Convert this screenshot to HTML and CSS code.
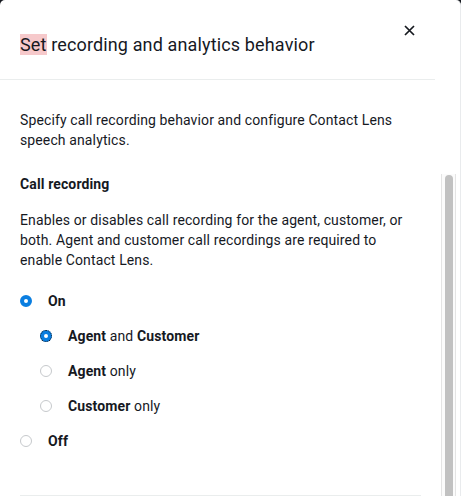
FILE: index.html
```html
<!DOCTYPE html>
<html lang="en">
<head>
<meta charset="utf-8">
<title>Set recording and analytics behavior</title>
<link rel="stylesheet" href="styles.css">
</head>
<body>
<div class="modal">
  <div class="modal-header">
    <h2 class="modal-title"><span class="hl">Set</span> recording and analytics behavior</h2>
    <button class="close" aria-label="Close">
      <svg width="11" height="11" viewBox="0 0 11 11"><path d="M1 1 L10 10 M10 1 L1 10" stroke="#16191f" stroke-width="1.7" fill="none" stroke-linecap="butt"/></svg>
    </button>
  </div>
  <div class="modal-body">
    <p class="desc">Specify call recording behavior and configure Contact Lens speech analytics.</p>
    <div class="scroll">
      <div class="scroll-content">
        <div class="section">
          <h3 class="section-title">Call recording</h3>
          <p class="section-text">Enables or disables call recording for the agent, customer, or both. Agent and customer call recordings are required to enable Contact Lens.</p>
          <div class="options">
            <label class="opt"><span class="radio checked"></span><span class="lbl"><b>On</b></span></label>
            <div class="sub-options">
              <label class="opt"><span class="radio checked focused"></span><span class="lbl"><b>Agent</b> and <b>Customer</b></span></label>
              <label class="opt"><span class="radio"></span><span class="lbl"><b>Agent</b> only</span></label>
              <label class="opt"><span class="radio"></span><span class="lbl"><b>Customer</b> only</span></label>
            </div>
            <label class="opt"><span class="radio"></span><span class="lbl"><b>Off</b></span></label>
          </div>
        </div>
      </div>
      <div class="scrollbar" aria-hidden="true"><div class="thumb"></div></div>
    </div>
  </div>
</div>
</body>
</html>
```
FILE: styles.css
```css
html, body {
  margin: 0;
  padding: 0;
  height: 100%;
  overflow: hidden;
  background: #16191f;
}
body {
  font-family: Roboto, "Noto Sans", sans-serif;
  color: #16191f;
  font-size: 14px;
  line-height: 20px;
  letter-spacing: 0.12px;
}
.modal {
  box-sizing: border-box;
  width: 461px;
  height: 100%;
  background: #ffffff;
  border-right: 1px solid #e9ebed;
  border-radius: 5px 5px 0 0;
}
.modal-header {
  display: flex;
  justify-content: space-between;
  align-items: flex-start;
  margin-right: 25px;
  padding: 33px 20px 22px 20px;
  border-bottom: 1px solid #eaeded;
}
.modal-title {
  margin: 0;
  font-size: 18px;
  line-height: 24px;
  font-weight: 400;
  color: #16191f;
  letter-spacing: 0.14px;
}
.hl {
  background: #f6c9cb;
}
.close {
  margin-top: -8px;
  padding: 0;
  border: 0;
  background: none;
  width: 11px;
  height: 11px;
  display: flex;
}
.modal-body {
  padding: 30px 0 0 20px;
}
.desc {
  margin: 0;
  padding-right: 40px;
}
.scroll {
  margin-top: 24px;
  width: 436px;
  height: 340px;
  display: flex;
  overflow: hidden;
}
.scroll-content {
  flex: 1;
  min-width: 0;
  padding-right: 20px;
}
.scrollbar {
  box-sizing: border-box;
  flex: none;
  width: 15px;
  height: 100%;
  padding: 1px 2px 1px 3px;
  background: #fbfbfb;
  border-left: 1px solid #e4e4e4;
  border-right: 1px solid #e4e4e4;
}
.thumb {
  width: 8px;
  height: 328px;
  border-radius: 4px;
  background: #c1c1c1;
}
.section {
  padding-bottom: 44px;
  border-bottom: 1px solid #eaeded;
}
.section-title {
  margin: 0;
  font-size: 14px;
  line-height: 20px;
  font-weight: 700;
}
.section-text {
  margin: 16px 0 0 0;
}
.options {
  margin-top: 21px;
  display: flex;
  flex-direction: column;
  gap: 15px;
}
.sub-options {
  display: flex;
  flex-direction: column;
  gap: 15px;
  padding-left: 20px;
}
.opt {
  display: flex;
  align-items: center;
  height: 20px;
}
.radio {
  box-sizing: border-box;
  width: 12px;
  height: 12px;
  border-radius: 50%;
  border: 1px solid #c6c9cc;
  background: #fff;
  flex: none;
}
.radio.checked {
  border: 4px solid #0a7ee0;
}
.radio.focused {
  outline: 1px dotted #16191f;
  outline-offset: -1px;
}
.lbl {
  margin-left: 16px;
}
.lbl b {
  font-weight: 700;
}
```
